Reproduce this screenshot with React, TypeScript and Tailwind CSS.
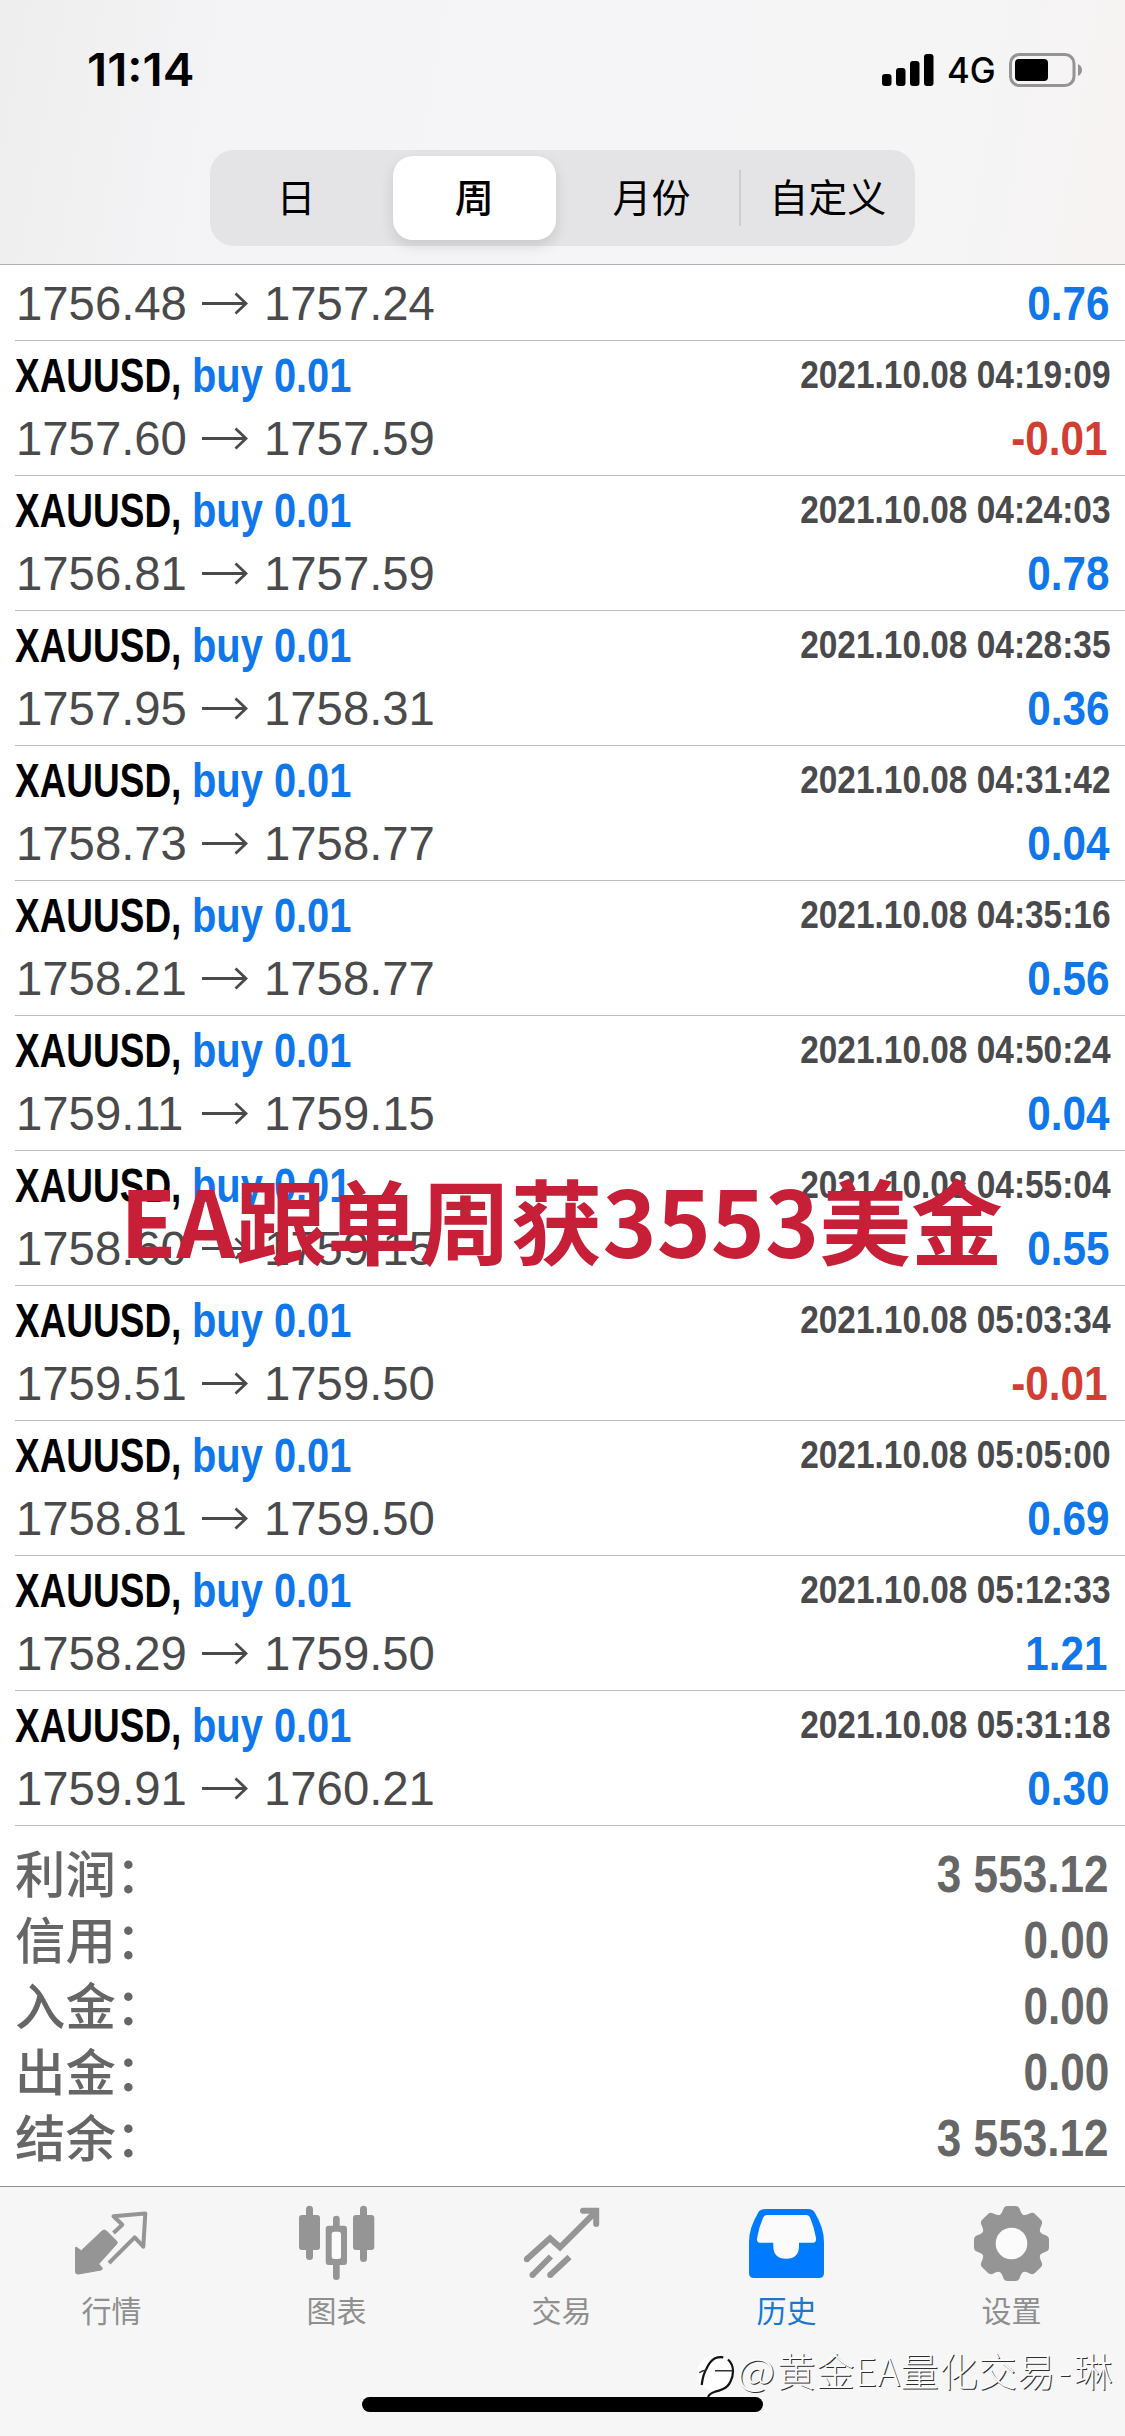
import React from "react";

type Deal = { from: string; to: string; profit: string; time?: string };

const deals: Deal[] = [
  { from: "1756.48", to: "1757.24", profit: "0.76" },
  { from: "1757.60", to: "1757.59", profit: "-0.01", time: "2021.10.08 04:19:09" },
  { from: "1756.81", to: "1757.59", profit: "0.78", time: "2021.10.08 04:24:03" },
  { from: "1757.95", to: "1758.31", profit: "0.36", time: "2021.10.08 04:28:35" },
  { from: "1758.73", to: "1758.77", profit: "0.04", time: "2021.10.08 04:31:42" },
  { from: "1758.21", to: "1758.77", profit: "0.56", time: "2021.10.08 04:35:16" },
  { from: "1759.11", to: "1759.15", profit: "0.04", time: "2021.10.08 04:50:24" },
  { from: "1758.60", to: "1759.15", profit: "0.55", time: "2021.10.08 04:55:04" },
  { from: "1759.51", to: "1759.50", profit: "-0.01", time: "2021.10.08 05:03:34" },
  { from: "1758.81", to: "1759.50", profit: "0.69", time: "2021.10.08 05:05:00" },
  { from: "1758.29", to: "1759.50", profit: "1.21", time: "2021.10.08 05:12:33" },
  { from: "1759.91", to: "1760.21", profit: "0.30", time: "2021.10.08 05:31:18" },
];

const totals = [
  ["利润：", "3 553.12"],
  ["信用：", "0.00"],
  ["入金：", "0.00"],
  ["出金：", "0.00"],
  ["结余：", "3 553.12"],
];

function StatusBar() {
  return (
    <div className="flex h-[150px] items-start justify-between pt-[47px] pr-[42px] pl-[87px] font-['Inter',sans-serif] text-black">
      <span className="origin-left scale-x-[1.06] text-[45px] leading-[45px] font-semibold">11:14</span>
      <div className="flex items-center pt-[5px]">
        <svg width="52" height="34" viewBox="0 0 52 34">
          <rect x="0" y="21" width="9.5" height="12" rx="3" />
          <rect x="14" y="15" width="9.5" height="18" rx="3" />
          <rect x="28" y="8" width="9.5" height="25" rx="3" />
          <rect x="42" y="1" width="9.5" height="32" rx="3" />
        </svg>
        <span className="ml-[13px] w-[62px] text-[35px] leading-[36px] font-medium">
          <span className="inline-block origin-left scale-x-[0.99]">4G</span>
        </span>
        <svg width="74" height="34" viewBox="0 0 74 34">
          <rect x="1.5" y="1.5" width="63.5" height="31" rx="9" fill="none" stroke="#949494" strokeWidth="3" />
          <rect x="6" y="6" width="33" height="22" rx="4" />
          <path d="M69 11 Q73 13 73 17 Q73 21 69 23 Z" fill="#949494" />
        </svg>
      </div>
    </div>
  );
}

function SegmentedControl() {
  return (
    <div className="ml-[210px] grid h-24 w-[705px] grid-cols-4 rounded-[24px] bg-[#e4e4e7] font-['Noto_Sans_CJK_SC',sans-serif] text-[39px] leading-[91px] text-black">
      <div className="pr-1 text-center">日</div>
      <div className="my-1.5 mr-[7px] ml-[7px] rounded-[20px] bg-white text-center leading-[79px] font-medium shadow-[0_6px_14px_rgba(0,0,0,0.12)]">周</div>
      <div className="pl-0.5 text-center">月份</div>
      <div className="relative pl-0.5 text-center">
        <span className="absolute top-5 left-0 h-14 w-[2px] bg-[#cdcdd1]" />
        自定义
      </div>
    </div>
  );
}

function profitClass(profit: string) {
  const tone = profit.startsWith("-") ? "text-[#d23e32]" : "text-[#0f77ea]";
  const edge = profit.endsWith("1") ? "mr-[18px]" : "mr-[16px]";
  return `${tone} ${edge} ml-auto origin-right scale-x-[0.88] font-bold`;
}

function DealRow({ deal }: { deal: Deal }) {
  return (
    <div className={deal.time ? "ml-[15px] h-[135px] border-b border-[#bcbcbe]" : "ml-[15px] h-[76px] border-b border-[#bcbcbe] pt-[9px]"}>
      {deal.time && (
        <div className="flex h-[68px] items-start font-bold">
          <span className="w-[177px] text-[48px] leading-[70px] text-black">
            <span className="inline-block origin-left scale-x-[0.77]">XAUUSD,</span>
          </span>
          <span className="text-[48px] leading-[70px] whitespace-nowrap text-[#0f77ea]">
            <span className="inline-block origin-left scale-x-[0.83]">buy 0.01</span>
          </span>
          <span className="mr-[15px] ml-auto origin-right scale-x-[0.868] text-[38.5px] leading-[67px] whitespace-nowrap text-[#4a4a4c]">{deal.time}</span>
        </div>
      )}
      <div className="flex pl-px text-[48px] leading-[59px]">
        <span className="w-[186px] text-[#4a4a4c]">
          <span className="inline-block origin-left scale-x-[0.985]">{deal.from}</span>
        </span>
        <svg className="mt-[11px] mr-[16px]" width="46" height="36" viewBox="0 0 46 36" fill="none" stroke="#4a4a4c" strokeWidth="2.8">
          <path d="M0 18.5H44M33.5 8.5L44 18.5L33.5 28.5" />
        </svg>
        <span className="origin-left scale-x-[0.985] text-[#4a4a4c]">{deal.to}</span>
        <span className={profitClass(deal.profit)}>{deal.profit}</span>
      </div>
    </div>
  );
}

function QuotesIcon() {
  return (
    <svg width="84" height="84" viewBox="0 0 84 84">
      <path d="M6 47L11.3 50.7L32 31Q34.2 29 36.5 31L46.5 41Q48 42.5 46.7 44L28.7 64L31.5 67Q33.5 69.5 31 70L8.5 74Q5.5 74.5 5.5 71.5V48Z" fill="#959595" stroke="#959595" strokeLinejoin="round" />
      <path d="M43.5 33L52.3 24.7L43.5 16.2L75.3 13.5L73.3 46.7L64.7 37.3L39 63" fill="none" stroke="#959595" strokeWidth="4" strokeLinejoin="round" />
    </svg>
  );
}

function ChartIcon() {
  return (
    <svg width="84" height="84" viewBox="0 0 84 84" fill="#959595">
      <rect x="11" y="5.7" width="7" height="54.3" rx="3.5" />
      <rect x="4" y="15" width="21" height="35" rx="3" />
      <rect x="65" y="5.7" width="7" height="56.3" rx="3.5" />
      <rect x="58" y="15" width="21.3" height="35" rx="3" />
      <rect x="38" y="15.7" width="6.7" height="64.3" rx="3.3" />
      <rect x="30.7" y="25.7" width="21.3" height="39.3" rx="3" />
      <rect x="36.7" y="31.7" width="9.3" height="27.3" rx="2.5" fill="#fbfbfb" />
    </svg>
  );
}

function TradeIcon() {
  return (
    <svg width="84" height="84" viewBox="0 0 84 84" fill="none" stroke="#959595" strokeWidth="6">
      <path d="M6.7 59.3L30 38.3L40 47.3L76 11.5" strokeLinecap="butt" />
      <circle cx="6.9" cy="59.2" r="3" fill="#959595" stroke="none" />
      <path d="M63 10.8H76.2V24" strokeLinecap="round" />
      <path d="M30.9 56.5L12.5 75M49.5 57L30.2 75" />
      <circle cx="12.5" cy="75" r="3" fill="#959595" stroke="none" />
      <circle cx="30.2" cy="75" r="3" fill="#959595" stroke="none" />
    </svg>
  );
}

function HistoryIcon() {
  return (
    <svg width="84" height="84" viewBox="0 0 84 84">
      <path d="M20 9H63Q68 9 70 13Q79 28 79 42V73Q79 78 74 78H9Q4 78 4 73V42Q4 28 13 13Q15 9 20 9Z" fill="#007aff" />
      <path d="M22 15H61Q64 15 65.3 18Q69 27 71 38Q71.6 42.7 68 42.7H54V46Q54 58.7 41.2 58.7Q28.3 58.7 28.3 46V42.7H15Q11.4 42.7 12 38.5Q14 27 18 18Q19.2 15 22 15Z" fill="#fbfbfb" />
    </svg>
  );
}

function SettingsIcon() {
  return (
    <svg width="84" height="84" viewBox="0 0 84 84">
      <g transform="translate(41.5 43.5)" fill="#959595">
        <circle r="30.5" />
        {[0, 45, 90, 135, 180, 225, 270, 315].map((a) => (
          <path key={a} transform={`rotate(${a})`} d="M-12.5 -27.5Q-9.5 -30 -8.5 -33.5Q-7.5 -37.5 -4 -37.5H4Q7.5 -37.5 8.5 -33.5Q9.5 -30 12.5 -27.5Z" />
        ))}
        <circle r="15.8" fill="#fbfbfb" />
      </g>
    </svg>
  );
}

const tabs = [
  { label: "行情", icon: <QuotesIcon />, active: false },
  { label: "图表", icon: <ChartIcon />, active: false },
  { label: "交易", icon: <TradeIcon />, active: false },
  { label: "历史", icon: <HistoryIcon />, active: true },
  { label: "设置", icon: <SettingsIcon />, active: false },
];

function TabBar() {
  return (
    <nav className="relative h-[250px] border-t border-[#919191] bg-[#f6f6f6] font-['Noto_Sans_CJK_SC',sans-serif]">
      <div className="-ml-[1px] grid w-[1125px] grid-cols-5 pt-[13px]">
        {tabs.map((tab) => (
          <div key={tab.label} className="flex flex-col items-center">
            {tab.icon}
            <span className={tab.active ? "mt-[2px] text-[30px] leading-[46px] text-[#1b78cf]" : "mt-[2px] text-[30px] leading-[46px] text-[#8f8f8f]"}>{tab.label}</span>
          </div>
        ))}
      </div>
      <div className="absolute top-[210px] left-[362px] h-[15px] w-[401px] rounded-full bg-black" />
      <div className="absolute top-[164px] left-[694px] flex items-start whitespace-nowrap">
        <svg width="43" height="48" viewBox="0 0 43 48">
          <circle cx="21" cy="22" r="18" fill="#ffffff" />
          <path d="M7.7 34Q9 23 12.7 17.3Q16 10 21 7.3Q25 5.5 29.3 6.3M34 8.5Q39 13 39 20Q39 26 36.5 30.5Q34 36 29 38Q25 40 21 40.7Q16 42 14 46" fill="none" stroke="#111111" strokeWidth="2.2" />
          <path d="M5.3 21.7Q8 19.5 12.7 19M21 19.7H38.5" fill="none" stroke="#333333" strokeWidth="1.4" />
        </svg>
        <span className="-mt-[8px] flex text-[38.4px] leading-[52px] font-light tracking-[0.5px] text-[#fbfbfb] [text-shadow:1px_1px_0_#2e2e2e]">
          <span className="w-[40px]">
            <span className="inline-block origin-left scale-x-[1.09]">@</span>
          </span>
          <span>黄金EA量化交易</span>
          <span className="w-[18px] text-center">-</span>
          <span>琳</span>
        </span>
      </div>
    </nav>
  );
}

export default function App() {
  return (
    <div className="relative flex h-[2436px] w-[1125px] flex-col overflow-hidden bg-white font-['Liberation_Sans',Arial,sans-serif]">
      <header className="h-[265px] border-b border-[#b2b2b4] bg-[linear-gradient(100deg,#eeeeee_0%,#f3f3f5_18%,#f5f5f7_40%,#f5f5f6_85%,#f8f3f3_100%)]">
        <StatusBar />
        <SegmentedControl />
      </header>
      <main className="flex-1">
        {deals.map((deal, i) => (
          <DealRow key={i} deal={deal} />
        ))}
        <div className="pt-[16px] pr-[16px] pl-[15px] text-[51px] leading-[66px] text-[#666666]">
          {totals.map(([label, value]) => (
            <div key={label} className="flex h-[66px] justify-between">
              <span className="-mt-[3px] font-['Noto_Sans_CJK_SC',sans-serif] text-[50.4px] font-medium">{label}</span>
              <span className="origin-right scale-x-[0.865] font-bold">{value}</span>
            </div>
          ))}
        </div>
      </main>
      <TabBar />
      <div className="absolute top-[1163px] left-[120px] font-['Noto_Sans_CJK_SC',sans-serif] text-[91.8px] leading-[110px] font-bold whitespace-nowrap text-[#c81f38]">
        EA跟单周获3553美金
      </div>
    </div>
  );
}
